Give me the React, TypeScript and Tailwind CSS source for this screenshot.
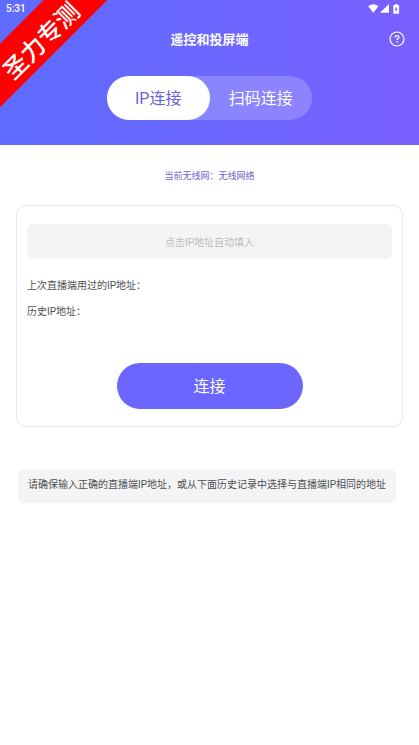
// ============================================================
// REMOTE CONTROL & CASTING - CONNECT SCREEN
// ============================================================

import React, { useState } from 'react';

type TabKey = 'ip' | 'scan';

// Status bar: time + signal icons
const StatusBar: React.FC = () => (
    <div className="flex h-4 items-center justify-between pt-px pr-[19px] pl-[6px] text-white">
        <span className="text-[10px] leading-4 font-medium">5:31</span>
        <svg width="32" height="10" viewBox="0 0 32 10" fill="currentColor" aria-hidden="true">
            <path d="M.2 2.2C1.7.9 3.4.2 5.3.2s3.6.7 5.1 2L5.3 8.8z" />
            <path d="M21 0v8.8h-9z" />
            <path
                fillRule="evenodd"
                d="M27 0h2.4v1h1.2c.3 0 .5.2.5.5v7.7c0 .3-.2.5-.5.5h-4.8c-.3 0-.5-.2-.5-.5V1.5c0-.3.2-.5.5-.5H27zM28.5 2.5L26.6 5.6h1.2v2.3L29.7 4.8h-1.2z"
            />
        </svg>
    </div>
);

// Diagonal corner ribbon
const Ribbon: React.FC = () => (
    <div className="pointer-events-none absolute top-[15px] left-[-52px] flex h-[45px] w-[180px] -rotate-45 items-center justify-center bg-[#ff0000] pt-[10px]">
        <span className="text-[24px] leading-6 font-medium whitespace-nowrap text-white">圣力专测</span>
    </div>
);

const TabBtn: React.FC<{
    label: string;
    active: boolean;
    onClick: () => void;
}> = ({ label, active, onClick }) => (
    <button
        type="button"
        onClick={onClick}
        className={`h-full flex-1 rounded-full pt-[2px] text-[16px] ${active ? 'bg-white text-[#6a62d8]' : 'text-white'}`}
    >
        {label}
    </button>
);

const App: React.FC = () => {
    const [tab, setTab] = useState<TabKey>('ip');
    const [address, setAddress] = useState('');

    return (
        <div className="min-h-screen bg-white font-[Roboto,'Noto_Sans_CJK_SC',sans-serif] text-[#4f4f51]">
            {/* Header */}
            <header className="relative overflow-hidden bg-linear-to-r from-[#5f6cff] via-[#6b67ff] to-[#7a5fff] pb-[25px]">
                <StatusBar />
                <div className="grid h-[46px] grid-cols-[1fr_auto_1fr] items-center px-[14px]">
                    <h1 className="col-start-2 pt-[2px] text-[13px] leading-5 font-bold text-white">遥控和投屏端</h1>
                    <button type="button" aria-label="帮助" className="justify-self-end text-white">
                        <svg width="16" height="16" viewBox="0 0 16 16" fill="none" stroke="currentColor">
                            <circle cx="8" cy="8" r="7" strokeWidth="1.2" />
                            <path d="M6.1 6.4c0-1.1.8-1.8 1.9-1.8s1.9.7 1.9 1.7c0 1.2-1.7 1.3-1.7 2.7" strokeWidth="1.3" />
                            <path d="M8.2 10.1v1.3" strokeWidth="1.4" />
                        </svg>
                    </button>
                </div>
                <div className="mx-auto mt-[14px] flex h-11 w-[205px] rounded-full bg-white/20">
                    <TabBtn label="IP连接" active={tab === 'ip'} onClick={() => setTab('ip')} />
                    <TabBtn label="扫码连接" active={tab === 'scan'} onClick={() => setTab('scan')} />
                </div>
                <Ribbon />
            </header>

            <main>
                <p className="mt-[23px] text-center text-[9px] leading-4 text-[#6c65cc]">当前无线网：无线网络</p>

                {/* Connect form */}
                <form
                    onSubmit={(e) => e.preventDefault()}
                    className="mx-4 mt-[21px] rounded-[10px] border border-[#e9e9ea] px-[10px] pt-[18px] pb-[17px]"
                >
                    <input
                        type="text"
                        aria-label="IP地址"
                        placeholder="点击IP地址自动填入"
                        value={address}
                        onChange={(e) => setAddress(e.target.value)}
                        className="block h-[35px] w-full rounded-md bg-[#f4f4f6] pt-[2px] text-center text-[10px] outline-none placeholder:text-[#bcbcbe]"
                    />
                    <p className="mt-[19px] text-[10px] leading-4">上次直播端用过的IP地址：</p>
                    <p className="mt-[10px] text-[10px] leading-4">历史IP地址：</p>
                    <button
                        type="submit"
                        className="mx-auto mt-[43px] block h-[46px] w-[186px] rounded-full bg-[#6b66ff] pt-[2px] text-[16px] text-white"
                    >
                        连接
                    </button>
                </form>

                {/* Hint */}
                <p className="mt-[42px] mr-[23px] ml-[18px] rounded-md bg-[#f4f4f6] pt-2 pb-[10px] text-center text-[10px] leading-4">
                    请确保输入正确的直播端IP地址，或从下面历史记录中选择与直播端IP相同的地址
                </p>
            </main>
        </div>
    );
};

export default App;
